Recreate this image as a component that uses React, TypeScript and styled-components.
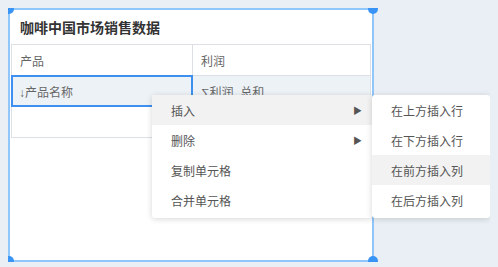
import React from "react";
import styled, { createGlobalStyle } from "styled-components";

const GlobalStyle = createGlobalStyle`
  body {
    margin: 8px;
    background: #e9eff4;
    font-family: "Noto Sans CJK SC", "Noto Sans", sans-serif;
  }
`;

const columns = ["产品", "利润"];

const menuItems = [
  { label: "插入", sub: true, active: true },
  { label: "删除", sub: true, active: false },
  { label: "复制单元格", sub: false, active: false },
  { label: "合并单元格", sub: false, active: false },
];

const subItems = [
  { label: "在上方插入行", active: false },
  { label: "在下方插入行", active: false },
  { label: "在前方插入列", active: true },
  { label: "在后方插入列", active: false },
];

const App: React.FC = () => {
  return (
    <>
      <GlobalStyle />
      <StyledCard>
        <StyledHandle $x="left" $y="top" />
        <StyledHandle $x="right" $y="top" />
        <StyledHandle $x="left" $y="bottom" />
        <StyledHandle $x="right" $y="bottom" />
        <StyledTitle>咖啡中国市场销售数据</StyledTitle>
        <StyledTable>
          <StyledRow>
            {columns.map((c) => (
              <StyledCell key={c}>{c}</StyledCell>
            ))}
          </StyledRow>
          <StyledRow $shaded>
            <StyledCell $selected>↓产品名称</StyledCell>
            <StyledCell>∑利润_总和</StyledCell>
          </StyledRow>
          <StyledRow>
            <StyledCell />
            <StyledCell />
          </StyledRow>
        </StyledTable>
        <StyledMenu>
          {menuItems.map((item) => (
            <StyledMenuItem key={item.label} $active={item.active}>
              <span>{item.label}</span>
              {item.sub && <StyledArrow>▶</StyledArrow>}
            </StyledMenuItem>
          ))}
          <StyledSubMenu>
            {subItems.map((item) => (
              <StyledMenuItem key={item.label} $active={item.active}>
                {item.label}
              </StyledMenuItem>
            ))}
          </StyledSubMenu>
        </StyledMenu>
      </StyledCard>
    </>
  );
};

const StyledCard = styled.div`
  position: relative;
  width: 362px;
  height: 250px;
  background: #fff;
  border: 2px solid #91c6fa;
`;

const StyledHandle = styled.div<{ $x: "left" | "right"; $y: "top" | "bottom" }>`
  position: absolute;
  width: 10px;
  height: 10px;
  border-radius: 50%;
  background: #3994f6;
  ${(p) => (p.$x === "left" ? "left: -6px;" : "right: -6px;")}
  ${(p) => (p.$y === "top" ? "top: -6px;" : "bottom: -6px;")}
`;

const StyledTitle = styled.div`
  height: 34px;
  line-height: 34px;
  padding-left: 10px;
  font-size: 14px;
  font-weight: bold;
  color: #333;
`;

const StyledTable = styled.div`
  margin: 0 1px;
  border: 1px solid #dcdfe3;
  border-bottom: none;
`;

const StyledRow = styled.div<{ $shaded?: boolean }>`
  display: grid;
  grid-template-columns: 180px 1fr;
  height: 30px;
  border-bottom: 1px solid #dcdfe3;
  background: ${(p) => (p.$shaded ? "#edf2f7" : "#fff")};
`;

const StyledCell = styled.div<{ $selected?: boolean }>`
  display: flex;
  align-items: center;
  padding-left: 8px;
  font-family: "Liberation Sans", "Noto Sans CJK SC", sans-serif;
  font-size: 12px;
  color: #666;
  white-space: nowrap;
  overflow: hidden;
  border-left: 1px solid #dcdfe3;
  &:first-child {
    border-left: none;
  }
  ${(p) =>
    p.$selected &&
    `
    margin: -1px -1px -1px -1px;
    border: 2px solid #3d8ff0 !important;
    padding-left: 6px;
    position: relative;
  `}
`;

const StyledMenu = styled.div`
  position: absolute;
  left: 142px;
  top: 85px;
  width: 220px;
  padding-bottom: 3px;
  background: #fff;
  border-radius: 3px;
  box-shadow: 0 1px 6px rgba(0, 0, 0, 0.16);
`;

const StyledSubMenu = styled.div`
  position: absolute;
  left: 100%;
  top: 0;
  width: 118px;
  padding-bottom: 3px;
  background: #fff;
  border-radius: 3px;
  box-shadow: 0 1px 6px rgba(0, 0, 0, 0.16);
`;

const StyledMenuItem = styled.div<{ $active?: boolean }>`
  display: flex;
  align-items: center;
  justify-content: space-between;
  height: 30px;
  padding: 0 10px 0 19px;
  font-size: 12px;
  color: #555;
  background: ${(p) => (p.$active ? "#f2f2f2" : "transparent")};
`;

const StyledArrow = styled.span`
  font-size: 9px;
  color: #555;
`;

export default App;
